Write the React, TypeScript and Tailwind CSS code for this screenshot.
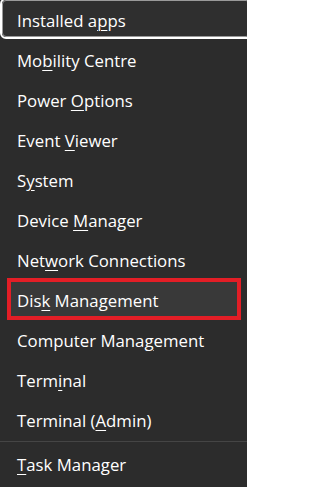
import React from "react";

type Item = { pre: string; key: string; post: string };

const items: Item[] = [
  { pre: "Installed a", key: "p", post: "ps" },
  { pre: "Mo", key: "b", post: "ility Centre" },
  { pre: "Power ", key: "O", post: "ptions" },
  { pre: "Event ", key: "V", post: "iewer" },
  { pre: "S", key: "y", post: "stem" },
  { pre: "Device ", key: "M", post: "anager" },
  { pre: "Net", key: "w", post: "ork Connections" },
  { pre: "Dis", key: "k", post: " Management" },
  { pre: "Computer Mana", key: "g", post: "ement" },
  { pre: "Term", key: "i", post: "nal" },
  { pre: "Terminal (", key: "A", post: "dmin)" },
];

function Label({ it }: { it: Item }) {
  return (
    <span className="whitespace-pre">
      {it.pre}
      <span className="underline decoration-1 underline-offset-[3px]">{it.key}</span>
      {it.post}
    </span>
  );
}

export default function App() {
  return (
    <div
      className="w-[247px] h-[487px] overflow-hidden bg-[#2c2c2c] text-white text-[16.8px]"
      style={{ fontFamily: '"Open Sans", "Noto Sans", sans-serif' }}
    >
      <div className="flex flex-col">
        {items.map((it, i) => (
          <div key={i} className="relative h-[40px] flex items-center pl-[17px]">
            {i === 0 && (
              <div className="absolute top-[-2px] left-0 w-[252px] h-[41px] rounded-[6px] border-2 border-white">
                <div className="w-full h-full rounded-[4px] border border-[#9a9a9a] bg-[#2f2f2f]" />
              </div>
            )}
            {i === 7 && (
              <div className="absolute top-[-2px] left-[7px] w-[234px] h-[42px] border-4 border-[#e31e26] bg-[#393939]" />
            )}
            <span className="relative leading-none pt-[2px]">
              <Label it={it} />
            </span>
          </div>
        ))}
        <div className="mt-px h-px bg-[#454545]" />
        <div className="mt-[2px] h-[40px] flex items-center pl-[17px]">
          <span className="leading-none whitespace-pre pt-[2px]">
            <span className="underline decoration-1 underline-offset-[3px]">T</span>ask Manager
          </span>
        </div>
      </div>
    </div>
  );
}
